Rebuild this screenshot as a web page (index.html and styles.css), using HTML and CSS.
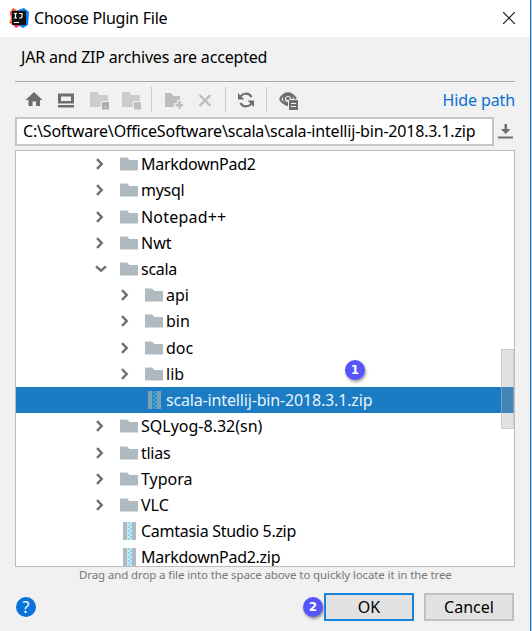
FILE: index.html
```html
<!DOCTYPE html>
<html lang="en">
<head>
<meta charset="utf-8">
<title>Choose Plugin File</title>
<link rel="stylesheet" href="styles.css">
</head>
<body>
<svg width="0" height="0" class="defs" aria-hidden="true">
  <symbol id="folder" viewBox="0 0 18 14"><path d="M0 0.5H7L9.5 3H18V13.5H0Z" fill="#afb9c0"/></symbol>
  <symbol id="right" viewBox="0 0 8 12"><path d="M1 1.2L5.700 6L1 10.800" fill="none" stroke="#6e6e6e" stroke-width="2.400"/></symbol>
  <symbol id="down" viewBox="0 0 12 8"><path d="M1 1.300L6 5.700L11 1.300" fill="none" stroke="#6e6e6e" stroke-width="2.400"/></symbol>
  <symbol id="zip" viewBox="0 0 13 18"><path d="M0 0H4V18H0ZM9 0H13V18H9Z" fill="#9aa7b0" fill-opacity="0.8"/><path d="M4 0H9V18H4Z" fill="#40b6e0" fill-opacity="0.3"/><path d="M5 1H7M7 3H9M5 5H7M7 7H9M5 9H7M7 11H9M5 13H7M7 15H9M5 17H7" stroke="#55bedf" stroke-width="1.200"/></symbol>
</svg>
<div class="window">
  <header class="titlebar">
    <svg class="logo" width="20" height="20" viewBox="0 0 20 20"><path d="M1 4L4 0L10 3L6 17L0 15L2 10Z" fill="#f97a35"/><path d="M1 5L4 1L10 5L4 15Z" fill="#f33b64"/><path d="M9 2L15 0L20 4L19 17L14 20L9 17Z" fill="#087cfa"/><path d="M1 14L6 15L12 17L7 20Z" fill="#ef3768"/><path d="M3 3H17V17H3Z" fill="#111"/><path d="M5 5.500H8M6.500 5.500V10M5 10H8M10 5.500H13V9L12 10H10M5 14.500H10" fill="none" stroke="#fff" stroke-width="1.200"/></svg>
    <h1 class="title">Choose Plugin File</h1>
    <svg class="close" width="12" height="12" viewBox="0 0 12 12"><path d="M0 0L12 12M12 0L0 12" stroke="#111" stroke-width="1.100"/></svg>
  </header>
  <p class="message">JAR and ZIP archives are accepted</p>
  <div class="toolbar">
    <svg class="tools" width="300" height="32" viewBox="15 82 300 32">
      <g fill="#6e6e6e">
        <path d="M34 92L42.500 100H40V106H36V101.500H32.500V106H28.500V100H25.500Z"/>
        <path d="M58 93.500H74V103.500H58ZM61 96.500V101H71V96.500ZM58 105H74V107.500H58Z" fill-rule="evenodd"/>
      </g>
      <path d="M90 92H97L99.500 95H108V101H101V107H90Z" fill="#cdcdcd"/><path d="M102 102H109V109.500H102Z" fill="#adadad"/><path d="M104 107H106" stroke="#ddd"/>
      <path d="M122 92H129L131.500 95H140V101H133V107H122Z" fill="#cdcdcd"/><path d="M134 102H141V109.500H134Z" fill="#bebebe"/>
      <path d="M151.500 87V112M225.500 87V112M266.500 87V112" stroke="#c9c9c9"/>
      <path d="M165 93H171L173.500 96H180V100H177V103H174V107H165Z" fill="#bdbdbd"/><path d="M179.500 101V109M175.500 105H183" stroke="#bdbdbd" stroke-width="2.400"/>
      <path d="M199.500 95L210.500 106M210.500 95L199.500 106" stroke="#bdbdbd" stroke-width="2.400"/>
      <g fill="none" stroke="#6e6e6e" stroke-width="2.200"><path d="M240 98A6.300 6.300 0 0 1 251.500 97M252 102A6.300 6.300 0 0 1 240.500 103"/></g>
      <path d="M238 93V99.500H244.500ZM254 107V100.500H247.500Z" fill="#6e6e6e"/>
      <path d="M280 99Q288 88 296 99M280 99Q283 104 288 105" fill="none" stroke="#6e6e6e" stroke-width="2.300"/><path d="M292 99A4 4 0 1 0 288 103" fill="none" stroke="#6e6e6e" stroke-width="2"/><circle cx="288" cy="98.500" r="1.800" fill="#6e6e6e"/>
      <path d="M289 100H298V110H289Z" fill="#6e6e6e"/><path d="M291 103.500H296M291 106.500H296" stroke="#eee" stroke-width="1.200"/>
    </svg>
    <a class="hide">Hide path</a>
  </div>
  <div class="pathrow">
    <div class="path">C:\Software\OfficeSoftware\scala\scala-intellij-bin-2018.3.1.zip</div>
    <svg class="history" width="15" height="15" viewBox="0 0 15 15"><path d="M0 12.500H15V14.500H0ZM6.500 0H9V5H12.500L7.700 10L3 5H6.500Z" fill="#6e6e6e"/></svg>
  </div>
  <div class="tree">
    <div class="row tight"><svg class="arrow"><use href="#right"/></svg><svg class="folder"><use href="#folder"/></svg><span>MarkdownPad2</span></div>
    <div class="row tight"><svg class="arrow"><use href="#right"/></svg><svg class="folder"><use href="#folder"/></svg><span>mysql</span></div>
    <div class="row loose"><svg class="arrow"><use href="#right"/></svg><svg class="folder"><use href="#folder"/></svg><span>Notepad++</span></div>
    <div class="row"><svg class="arrow"><use href="#right"/></svg><svg class="folder"><use href="#folder"/></svg><span>Nwt</span></div>
    <div class="row tight"><svg class="arrow open"><use href="#down"/></svg><svg class="folder"><use href="#folder"/></svg><span>scala</span></div>
    <div class="row child"><svg class="arrow"><use href="#right"/></svg><svg class="folder"><use href="#folder"/></svg><span>api</span></div>
    <div class="row child"><svg class="arrow"><use href="#right"/></svg><svg class="folder"><use href="#folder"/></svg><span>bin</span></div>
    <div class="row child"><svg class="arrow"><use href="#right"/></svg><svg class="folder"><use href="#folder"/></svg><span>doc</span></div>
    <div class="row child"><svg class="arrow"><use href="#right"/></svg><svg class="folder"><use href="#folder"/></svg><span>lib</span></div>
    <div class="row child selected"><i class="arrow"></i><svg class="zip"><use href="#zip"/></svg><span>scala-intellij-bin-2018.3.1.zip</span></div>
    <div class="row"><svg class="arrow"><use href="#right"/></svg><svg class="folder"><use href="#folder"/></svg><span>SQLyog-8.32(sn)</span></div>
    <div class="row tight"><svg class="arrow"><use href="#right"/></svg><svg class="folder"><use href="#folder"/></svg><span>tlias</span></div>
    <div class="row"><svg class="arrow"><use href="#right"/></svg><svg class="folder"><use href="#folder"/></svg><span>Typora</span></div>
    <div class="row"><svg class="arrow"><use href="#right"/></svg><svg class="folder"><use href="#folder"/></svg><span>VLC</span></div>
    <div class="row tight"><i class="arrow"></i><svg class="zip"><use href="#zip"/></svg><span>Camtasia Studio 5.zip</span></div>
    <div class="row tight"><i class="arrow"></i><svg class="zip"><use href="#zip"/></svg><span>MarkdownPad2.zip</span></div>
    <div class="scroll"></div>
    <b class="badge one">1</b>
  </div>
  <p class="hint">Drag and drop a file into the space above to quickly locate it in the tree</p>
  <footer class="footer">
    <span class="help">?</span>
    <b class="badge">2</b>
    <button class="btn primary">OK</button>
    <button class="btn">Cancel</button>
  </footer>
</div>
</body>
</html>
```
FILE: styles.css
```css
* { box-sizing: border-box; }
body { margin: 0; background: #f1f1f1; font: 16px/26px "Noto Sans", sans-serif; color: #000; }
.defs { position: absolute; }
.window { width: 532px; height: 631px; overflow: hidden; background: #f1f1f1; border-right: 1px solid #a5cdea; box-shadow: inset -1px 0 #0f7dd3; }
.titlebar { display: flex; align-items: center; height: 37px; margin-right: 1px; padding: 0 15px 2px 9px; background: #fff; }
.title { flex: 1; margin: 0 0 0 5px; font-size: 16px; font-weight: 400; letter-spacing: -0.23px; }
.message { height: 44px; margin: 0 0 0 21px; padding-top: 7px; letter-spacing: -0.18px; }
.toolbar { display: flex; justify-content: space-between; width: 500px; height: 36px; margin-left: 15px; border-top: 1px solid #a8a8a8; }
.tools { display: block; }
.hide { padding-top: 5px; color: #0b6fcd; white-space: nowrap; letter-spacing: -0.1px; }
.pathrow { display: flex; align-items: center; height: 33px; margin-left: 15px; padding-bottom: 4px; }
.path { width: 479px; height: 29px; border: 2px solid #c6c6c6; background: #fff; padding-left: 6px; line-height: 25px; white-space: nowrap; letter-spacing: -0.19px; }
.history { margin-left: 4px; }
.tree { position: relative; width: 500px; height: 417px; margin-left: 15px; border: 1px solid #bcbcbc; background: #fff; overflow: hidden; }
.row { display: flex; align-items: center; height: 26.23px; padding-left: 79px; line-height: 26px; white-space: nowrap; }
.tight { letter-spacing: -0.28px; }
.loose { letter-spacing: 0.2px; }
.child { padding-left: 104px; }
.selected { background: #1b7cc4; color: #e8f3fb; letter-spacing: -0.16px; }
.arrow { flex: none; width: 8px; height: 12px; margin-left: 1px; margin-right: 16px; }
.arrow.open { width: 12px; height: 8px; margin-left: 0; margin-right: 13px; }
.folder { flex: none; width: 18px; height: 14px; margin-right: 3px; }
.zip { flex: none; width: 13px; height: 18px; margin: 0 5px 0 3px; }
.scroll { position: absolute; left: 485px; top: 198px; width: 13px; height: 80px; border: 1px solid #bbb8; background: #a0a0a04d; }
.badge { flex: none; width: 20px; height: 20px; border-radius: 50%; background: #5655fb; color: #fff; font: 700 12px/20px "DejaVu Sans", sans-serif; text-align: center; box-shadow: 1px 2px 3px #0006; }
.one { position: absolute; left: 329px; top: 209px; }
.hint { height: 20px; margin: 0 0 0 79px; font-size: 11.5px; line-height: 15px; letter-spacing: -0.11px; color: #777; white-space: nowrap; }
.footer { display: flex; align-items: center; height: 39px; padding-left: 16px; }
.help { width: 20px; height: 20px; margin-right: 267px; border-radius: 50%; background: #0873d8; color: #fff; font-size: 16px; line-height: 20px; text-align: center; }
.btn { width: 90px; height: 28px; margin-right: 10px; padding: 0; border: 2px solid #c0c0c0; background: #e2e2e2; font: 16px/24px "Noto Sans", sans-serif; color: #000; }
.primary { margin-left: 1px; border: 2px solid #1583dc; }
```
